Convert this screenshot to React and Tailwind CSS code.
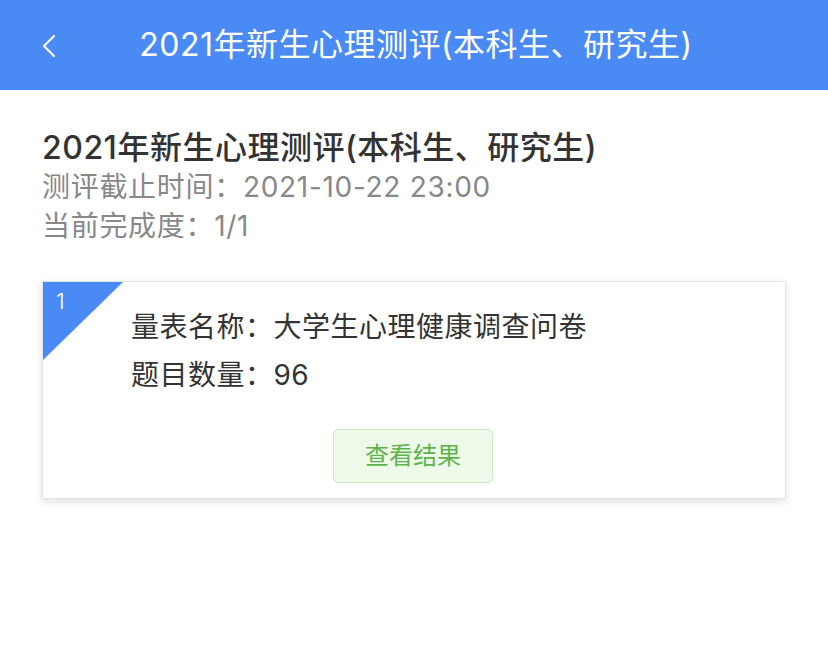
import React from "react";

// 新生心理测评 detail page
export default function App() {
  return (
    <div
      className="w-[828px] h-[663px] bg-white text-[#333]"
      style={{ fontFamily: 'Inter, "Noto Sans CJK SC", "Noto Sans", sans-serif' }}
    >
      {/* header */}
      <div className="relative h-[90px] bg-[#4a8af4] flex items-center justify-center">
        <svg
          className="absolute left-[40px] top-[33px]"
          width="18"
          height="26"
          viewBox="0 0 18 26"
          fill="none"
          stroke="white"
          strokeWidth="2.2"
          strokeLinecap="round"
          strokeLinejoin="round"
        >
          <path d="M14 3 L4 13 L14 23" />
        </svg>
        <div className="text-white text-[32px] tracking-[0.5px] leading-none pl-[4px]">
          2021年新生心理测评(本科生、研究生)
        </div>
      </div>

      {/* summary */}
      <div className="px-[42px] pt-[38px]">
        <div className="text-[32px] tracking-[0.5px] font-medium leading-[40px] text-[#333]">
          2021年新生心理测评(本科生、研究生)
        </div>
        <div className="text-[28px] tracking-[0.7px] leading-[39px] text-[#888]">测评截止时间：2021-10-22 23:00</div>
        <div className="text-[28px] tracking-[0.7px] leading-[39px] text-[#888]">当前完成度：1/1</div>
      </div>

      {/* scale card */}
      <div className="mx-[42px] mt-[35px] relative border border-[#e4e4e4] bg-white shadow-[0_3px_8px_rgba(0,0,0,0.12)] pt-[21px] pb-[15px]">
        <div className="absolute left-0 top-0 w-[80px] h-[78px] bg-[#4a8af4] [clip-path:polygon(0_0,100%_0,0_100%)]" />
        <div className="absolute left-[13px] top-[8px] text-white text-[22px] font-light leading-none">1</div>
        <div className="pl-[88px]">
          <div className="text-[28px] tracking-[0.5px] leading-[48px] text-[#333]">量表名称：大学生心理健康调查问卷</div>
          <div className="text-[28px] tracking-[0.5px] leading-[48px] text-[#333]">题目数量：96</div>
        </div>
        <div className="flex justify-center mt-[30px] pr-[2px]">
          <button className="w-[160px] h-[54px] rounded-[5px] bg-[#edf9e9] border border-[#c6e9bd] text-[#5db44a] text-[24px] flex items-center justify-center">
            查看结果
          </button>
        </div>
      </div>
    </div>
  );
}
